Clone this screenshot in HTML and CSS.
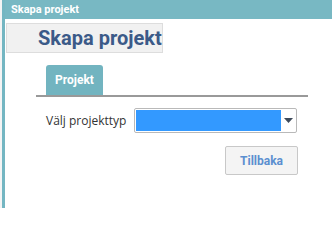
FILE: index.html
```html
<!DOCTYPE html>
<html>
<head>
<meta charset="utf-8">
<link rel="stylesheet" href="styles.css">
</head>
<body>
<div class="page">
  <div class="gutter"></div>
  <div class="dialog">
    <div class="titlebar">Skapa projekt</div>
    <div class="content">
      <div class="heading">Skapa projekt</div>
      <div class="tabs">
        <div class="tab">Projekt</div>
      </div>
      <div class="form-row">
        <label class="label">Välj projekttyp</label>
        <div class="select">
          <div class="select-value"></div>
          <div class="select-arrow">
            <svg width="9" height="5" viewBox="0 0 9 5"><path d="M0 0 L9 0 L4.5 5 Z" fill="#3d4a5a"/></svg>
          </div>
        </div>
      </div>
      <div class="actions">
        <button class="btn">Tillbaka</button>
      </div>
    </div>
  </div>
</div>
</body>
</html>
```
FILE: styles.css
```css
html, body {
  margin: 0;
  padding: 0;
  background: #ffffff;
}
.page {
  display: flex;
  width: 332px;
  height: 208px;
  overflow: hidden;
}
.gutter {
  width: 2px;
  background: #f4f4f4;
}
.dialog {
  flex: 1;
  border-left: 3px solid #74b6c2;
  display: flex;
  flex-direction: column;
  background: #fff;
}
.titlebar {
  height: 19px;
  background: #78b8c3;
  color: #fff;
  font-family: Roboto, "Liberation Sans", sans-serif;
  font-weight: bold;
  font-size: 11px;
  line-height: 19px;
  padding-left: 6px;
}
.content {
  display: flex;
  flex-direction: column;
}
.heading {
  margin-top: 4px;
  margin-left: 1px;
  height: 28px;
  background: #f1f1f1;
  border: 1px solid #dddddd;
  font-family: Roboto, "Liberation Sans", sans-serif;
  font-weight: bold;
  font-size: 20px;
  line-height: 28px;
  color: #3b5a88;
  padding-left: 31px;
  box-sizing: content-box;
  width: 124px;
}
.tabs {
  margin-top: 12px;
  margin-left: 31px;
  width: 262px;
  border-bottom: 2px solid #999999;
  display: flex;
  padding-left: 10px;
}
.tab {
  width: 57px;
  height: 30px;
  background: #72b4c0;
  border-radius: 3px 3px 0 0;
  color: #fff;
  font-family: Roboto, "Liberation Sans", sans-serif;
  font-weight: bold;
  font-size: 12px;
  line-height: 30px;
  text-align: center;
}
.form-row {
  display: flex;
  align-items: center;
  margin-top: 11px;
  margin-left: 41px;
}
.label {
  font-family: "Open Sans", "Liberation Sans", sans-serif;
  font-size: 12px;
  color: #333333;
  width: 88px;
}
.select {
  width: 161px;
  height: 23px;
  border: 1px solid #b9b9b9;
  border-radius: 2px;
  display: flex;
  background: #fff;
}
.select-value {
  width: 145px;
  margin: 1px 0 1px 1px;
  background: #3399ff;
}
.select-arrow {
  flex: 1;
  display: flex;
  align-items: center;
  justify-content: center;
}
.actions {
  display: flex;
  justify-content: flex-end;
  margin-top: 13px;
  width: 293px;
}
.btn {
  width: 73px;
  height: 29px;
  background: #f4f4f4;
  border: 1px solid #c8c8c8;
  border-radius: 2px;
  color: #5b8fd0;
  font-family: Roboto, "Liberation Sans", sans-serif;
  font-weight: bold;
  font-size: 12px;
  padding: 0;
}
```
